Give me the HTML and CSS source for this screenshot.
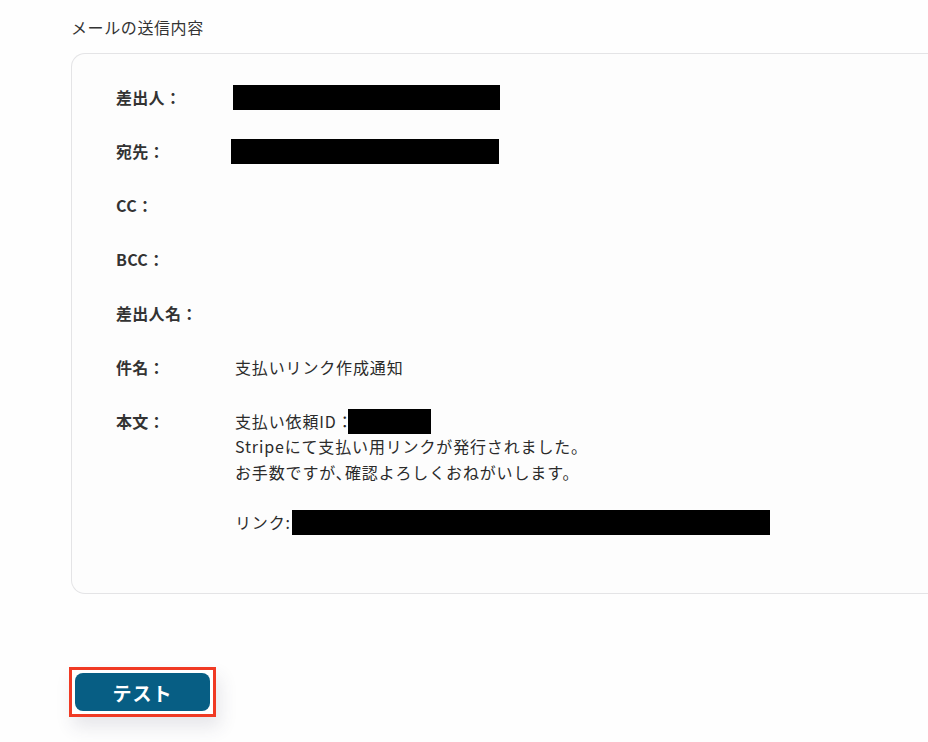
FILE: index.html
```html
<!DOCTYPE html>
<html lang="ja">
<head>
<meta charset="utf-8">
<link rel="stylesheet" href="styles.css">
</head>
<body>
<div class="page">
  <h2 class="title">メールの送信内容</h2>
  <div class="card">
    <div class="rows">
      <div class="label">差出人：</div>
      <div class="value"><span class="redact r-from"></span></div>
      <div class="label">宛先：</div>
      <div class="value"><span class="redact r-to"></span></div>
      <div class="label">CC：</div>
      <div class="value"></div>
      <div class="label">BCC：</div>
      <div class="value"></div>
      <div class="label">差出人名：</div>
      <div class="value"></div>
      <div class="label">件名：</div>
      <div class="value">支払いリンク作成通知</div>
      <div class="label">本文：</div>
      <div class="value body">
        <div class="line">支払い依頼ID：<span class="redact r-id"></span></div>
        <div class="line">Stripeにて支払い用リンクが発行されました。</div>
        <div class="line">お手数ですが､確認よろしくおねがいします。</div>
        <div class="line">&nbsp;</div>
        <div class="line">リンク:<span class="redact r-link"></span></div>
      </div>
    </div>
  </div>
  <div class="actions">
    <div class="highlight">
      <button class="btn">テスト</button>
    </div>
  </div>
</div>
</body>
</html>
```

FILE: styles.css
```css
html, body {
  margin: 0;
  padding: 0;
  background: #fefefe;
}
body {
  font-family: "Noto Sans CJK JP", "Noto Sans", sans-serif;
  color: #2b2b2b;
  width: 928px;
  height: 742px;
  overflow: hidden;
}
.page {
  padding: 14px 0 0 71px;
}
.title {
  margin: 0;
  font-size: 16px;
  font-weight: 400;
  line-height: 26px;
  letter-spacing: 0.6px;
  color: #333;
}
.card {
  margin-top: 13px;
  width: 900px;
  box-sizing: border-box;
  border: 1px solid #e4e4e6;
  border-right: none;
  border-radius: 14px 0 0 14px;
  background: #fdfdfd;
  padding: 31px 0 58px 44px;
}
.rows {
  display: grid;
  grid-template-columns: 119px 1fr;
  row-gap: 29px;
  font-size: 16px;
  line-height: 25px;
  letter-spacing: 0.85px;
}
.label {
  font-weight: 700;
  color: #333;
  letter-spacing: 0.3px;
}
.value {
  color: #2b2b2b;
  min-height: 25px;
  display: flex;
  align-items: center;
}
.value.body {
  display: block;
}
.line {
  height: 25.3px;
  display: flex;
  align-items: center;
}
.redact {
  display: inline-block;
  background: #000;
  height: 25px;
}
.r-from { width: 267px; margin-left: -2px; }
.r-to { width: 268px; margin-left: -4px; }
.r-id { width: 83px; margin-left: -6px; }
.r-link { width: 478px; margin-left: 1px; }
.actions {
  margin-top: 73px;
  margin-left: -2px;
}
.highlight {
  display: inline-block;
  border: 3px solid #f03a24;
  padding: 3px;
  background: #fff;
  box-shadow: 4px 10px 18px rgba(60, 60, 90, 0.12);
}
.btn {
  display: block;
  width: 135px;
  height: 38px;
  border: none;
  border-radius: 8px;
  background: #075e84;
  color: #fff;
  font-family: "Noto Sans CJK JP", sans-serif;
  font-size: 19px;
  font-weight: 700;
  letter-spacing: 1px;
  padding: 0;
}
```
